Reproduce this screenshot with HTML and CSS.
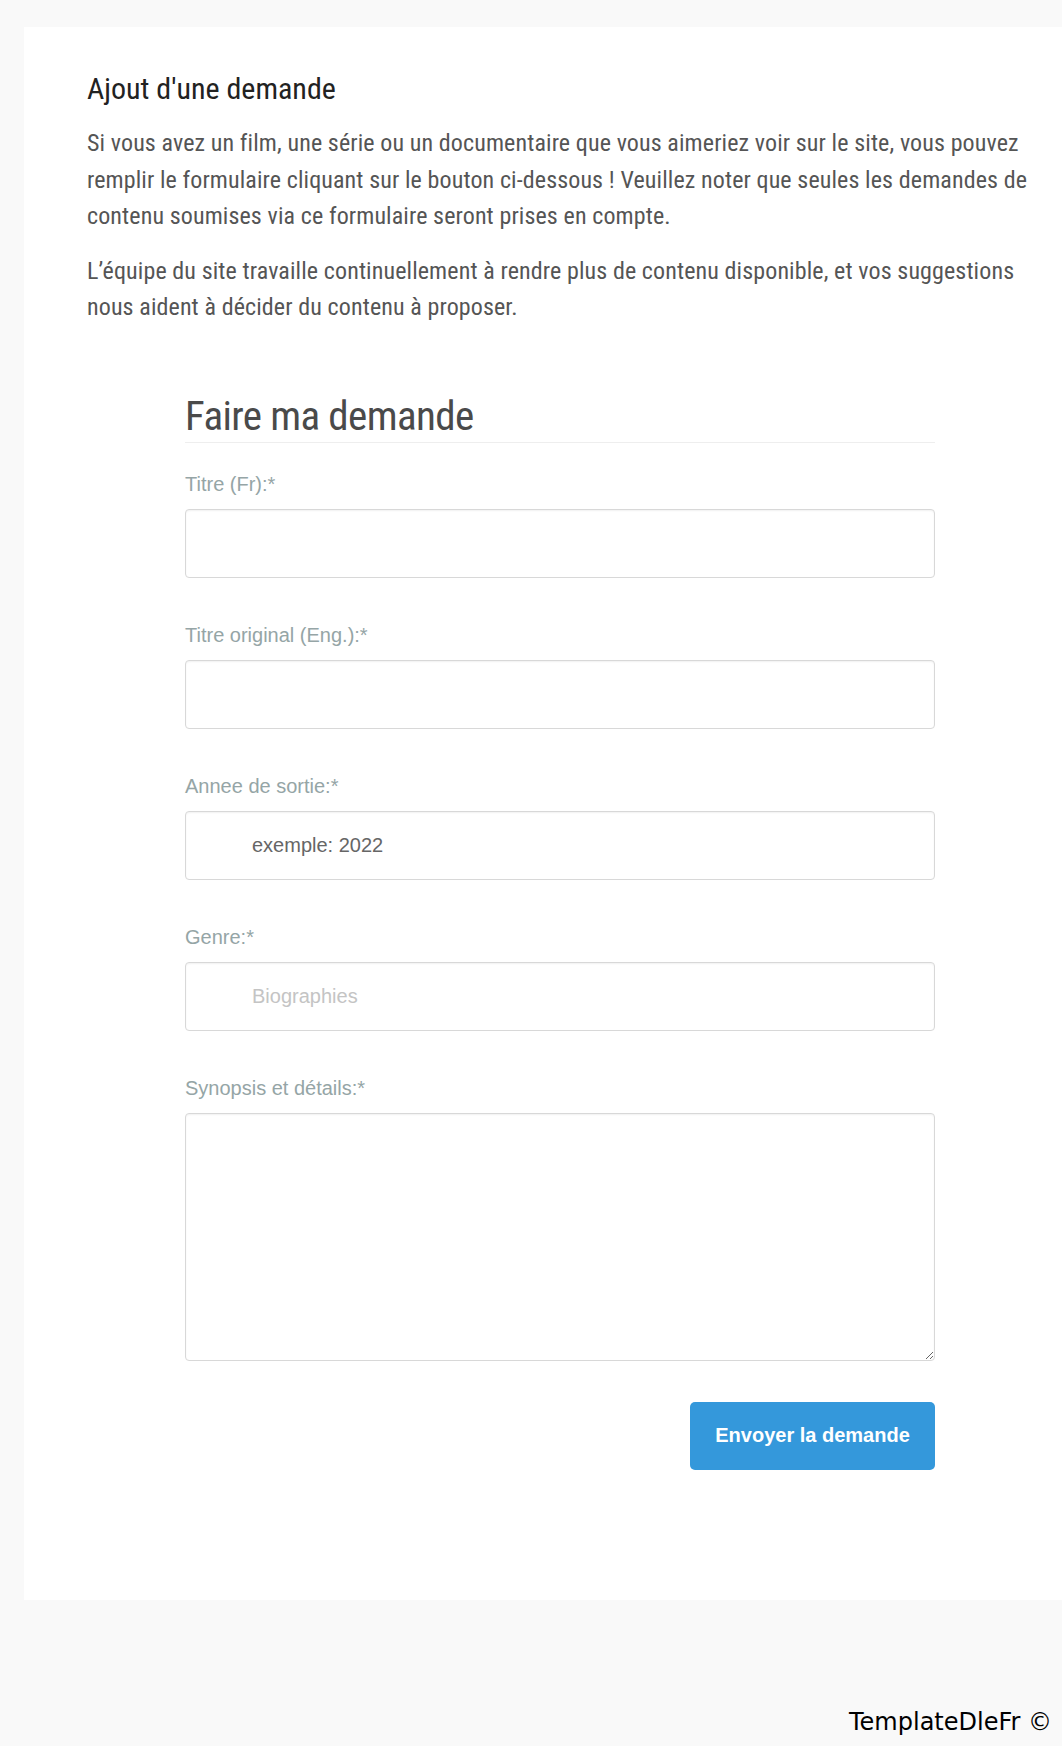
FILE: index.html
```html
<!DOCTYPE html>
<html lang="fr">
<head>
<meta charset="utf-8">
<title>Ajout d'une demande</title>
<link rel="stylesheet" href="styles.css">
</head>
<body>
<div class="page">
  <main class="card">
    <h1 class="title">Ajout d'une demande</h1>
    <p class="lead">Si vous avez un film, une série ou un documentaire que vous aimeriez voir sur le site, vous pouvez remplir le formulaire cliquant sur le bouton ci-dessous ! Veuillez noter que seules les demandes de contenu soumises via ce formulaire seront prises en compte.</p>
    <p class="lead">L’équipe du site travaille continuellement à rendre plus de contenu disponible, et vos suggestions nous aident à décider du contenu à proposer.</p>

    <form class="form">
      <h2 class="form-title">Faire ma demande</h2>
      <div class="field">
        <label class="label" for="t-fr">Titre (Fr):*</label>
        <input class="input" id="t-fr" type="text">
      </div>
      <div class="field">
        <label class="label" for="t-en">Titre original (Eng.):*</label>
        <input class="input" id="t-en" type="text">
      </div>
      <div class="field">
        <label class="label" for="year">Annee de sortie:*</label>
        <input class="input input-year" id="year" type="text" placeholder="exemple: 2022">
      </div>
      <div class="field">
        <label class="label" for="genre">Genre:*</label>
        <input class="input" id="genre" type="text" placeholder="Biographies">
      </div>
      <div class="field">
        <label class="label" for="syn">Synopsis et détails:*</label>
        <textarea class="textarea" id="syn"></textarea>
      </div>
      <div class="actions">
        <button class="submit" type="button">Envoyer la demande</button>
      </div>
    </form>
  </main>
  <footer class="credit">TemplateDleFr ©</footer>
</div>
</body>
</html>
```
FILE: styles.css
```css
html, body {
  margin: 0;
  padding: 0;
  background: #f9f9f9;
}

.page {
  padding-top: 27px;
  overflow: hidden;
}

.card {
  display: block;
  margin-left: 24px;
  background: #ffffff;
  padding: 44px 29px 130px 63px;
  font-family: "Roboto Condensed", "Roboto", sans-serif;
  font-stretch: condensed;
}

.title {
  margin: 0;
  font-size: 30px;
  line-height: 36px;
  font-weight: 400;
  color: #222222;
}

.lead {
  margin: 18px 0 0;
  font-size: 24px;
  line-height: 36.5px;
  letter-spacing: 0.11px;
  color: #555555;
}

.form {
  width: 750px;
  margin: 65px auto 0;
}

.form-title {
  margin: 0 0 30px;
  padding-bottom: 1px;
  border-bottom: 1px solid #eeeeee;
  font-size: 41px;
  line-height: 50px;
  letter-spacing: -0.6px;
  font-weight: 400;
  color: #4a4a4a;
}

.field {
  display: flex;
  flex-direction: column;
}

.field + .field {
  margin-top: 46px;
}

.label {
  font-family: "Liberation Sans", Arial, sans-serif;
  font-size: 20px;
  line-height: 22px;
  color: #95a5a6;
  margin-bottom: 14px;
}

.input {
  box-sizing: border-box;
  height: 69px;
  width: 100%;
  border: 1px solid #d8d8d8;
  border-radius: 4px;
  box-shadow: inset 0 1px 2px rgba(0, 0, 0, 0.06);
  padding: 0 16px 0 66px;
  font-family: "Liberation Sans", Arial, sans-serif;
  font-size: 20px;
  color: #666666;
  background: #ffffff;
  outline: none;
}

.input::placeholder {
  color: #c4c4c4;
}

.input-year::placeholder {
  color: #666666;
}

.textarea {
  box-sizing: border-box;
  height: 248px;
  width: 100%;
  border: 1px solid #d8d8d8;
  border-radius: 4px;
  box-shadow: inset 0 1px 2px rgba(0, 0, 0, 0.06);
  font-family: "Liberation Sans", Arial, sans-serif;
  font-size: 20px;
  background: #ffffff;
  resize: vertical;
  outline: none;
}

.actions {
  display: flex;
  justify-content: flex-end;
  margin-top: 41px;
}

.submit {
  height: 68px;
  width: 245px;
  border: 0;
  border-radius: 5px;
  background: #3498db;
  color: #ffffff;
  font-family: "Liberation Sans", Arial, sans-serif;
  font-weight: 700;
  font-size: 20px;
  cursor: pointer;
}

.credit {
  margin-top: 108px;
  padding-right: 10px;
  text-align: right;
  font-family: "DejaVu Sans", sans-serif;
  font-size: 24px;
  line-height: 28px;
  color: #000000;
}
```
